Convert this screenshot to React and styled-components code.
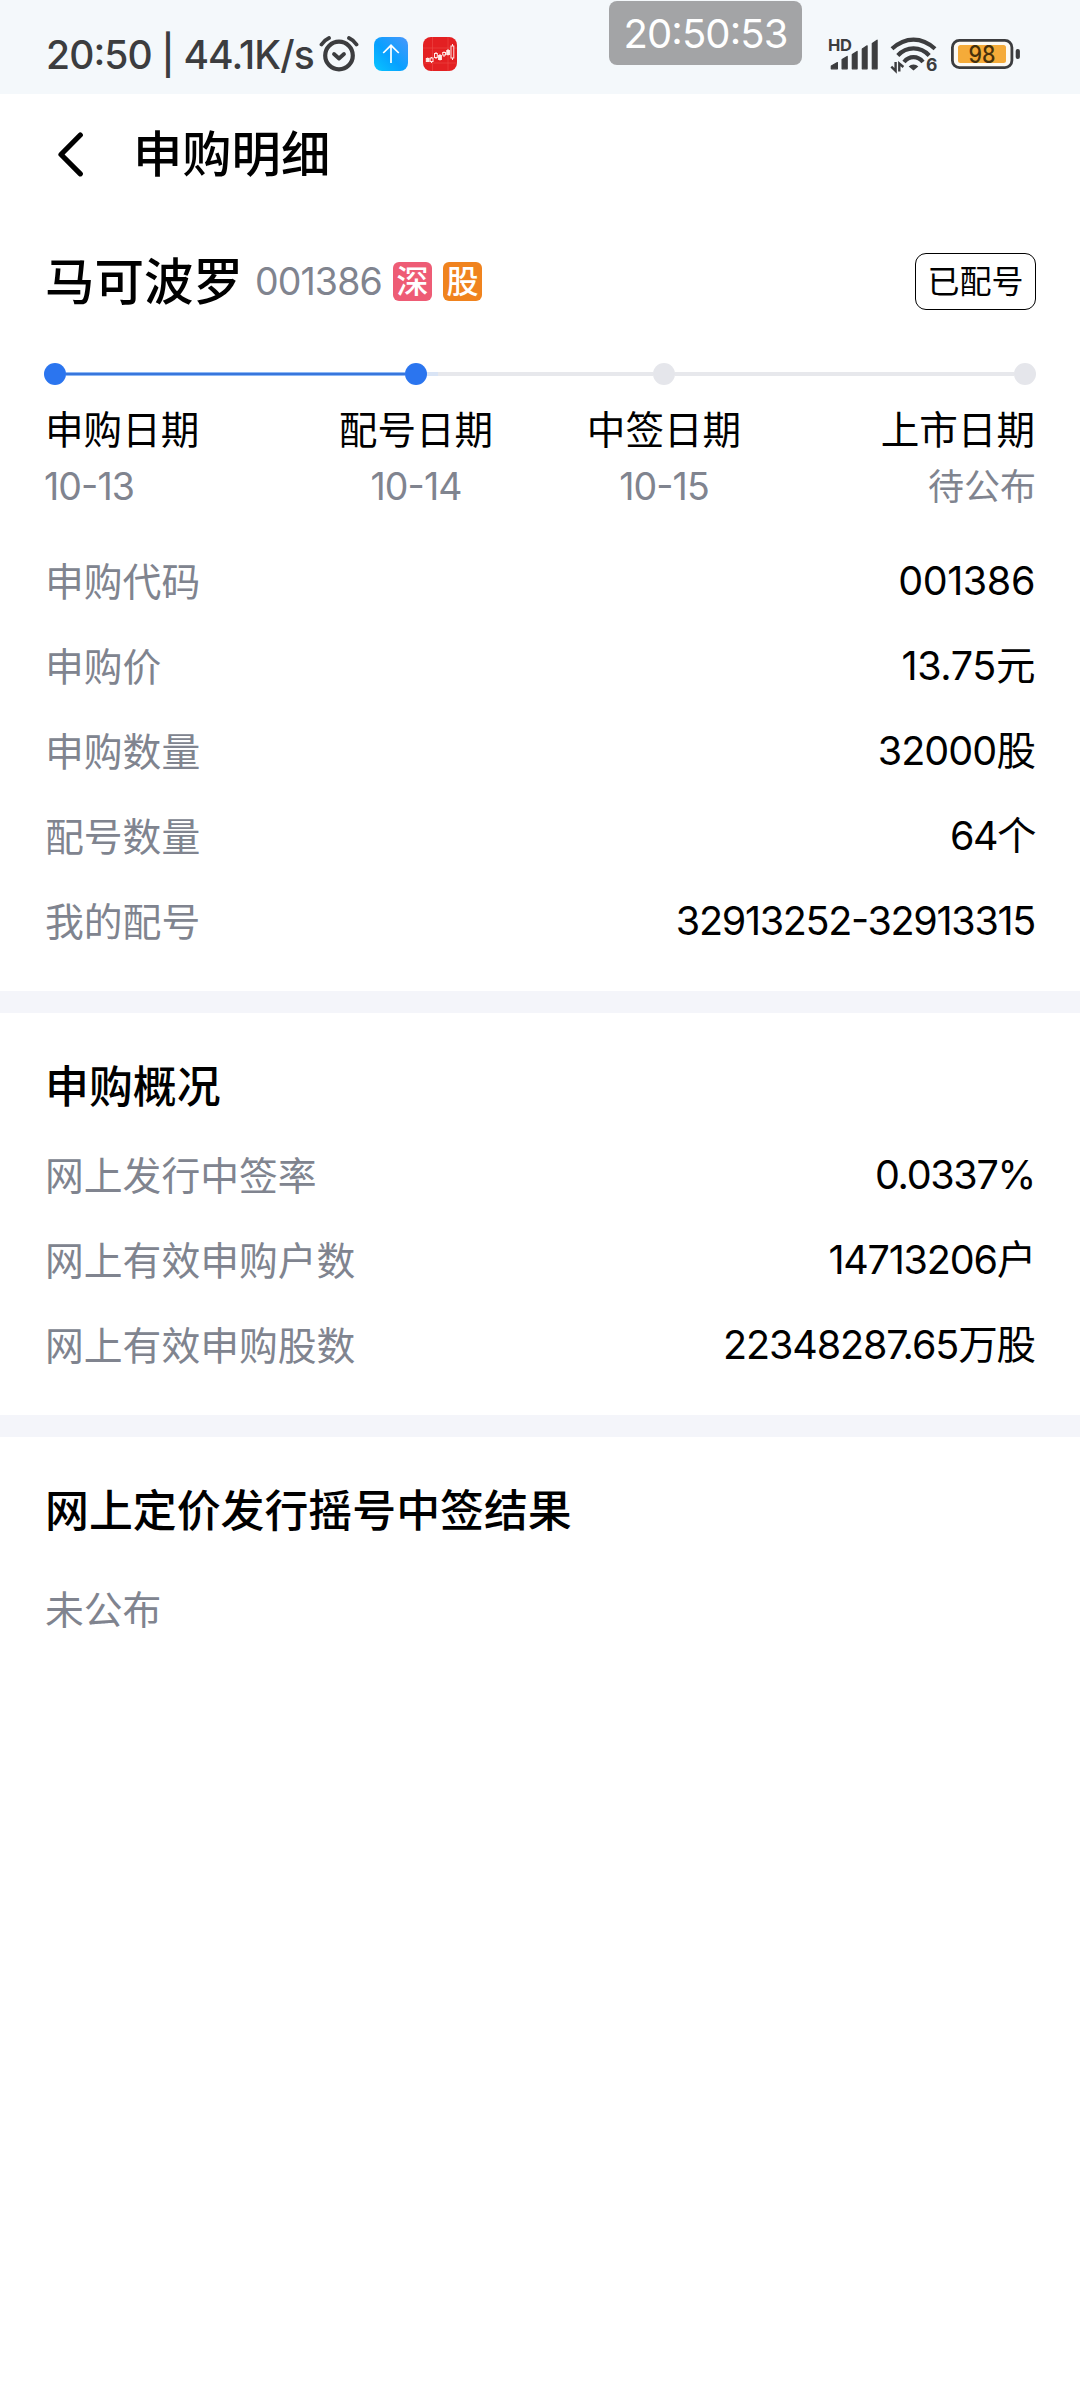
import styled, { createGlobalStyle } from 'styled-components';

const GlobalStyle = createGlobalStyle`
    * {
        box-sizing: border-box;
    }

    body {
        margin: 0;
        background-color: #ffffff;
        color: #000000;
        font-family: Inter, "Noto Sans CJK SC", sans-serif;
        font-feature-settings: "case" 1;
    }
`;

const Page = styled.div`
    position: relative;
    width: 1080px;
    min-height: 2400px;
    overflow: hidden;
    background-color: #ffffff;
`;

const StatusBar = styled.header`
    display: flex;
    justify-content: space-between;
    height: 94px;
    padding: 14px 59px 0 46px;
    background-color: #f4f8fb;
    color: #3c3d3f;
`;

const StatusGroup = styled.div`
    display: flex;
    align-items: center;
    gap: ${(props) => props.$gap};
`;

const StatusText = styled.span`
    width: 273px;
    margin-right: -15px;
    font-size: 39px;
    font-weight: 500;
    letter-spacing: -0.9px;
    white-space: nowrap;
`;

const ClockToast = styled.div`
    position: absolute;
    top: 1px;
    left: 609px;
    width: 193px;
    height: 64px;
    border-radius: 8px;
    background-color: #a3a4a6;
    color: #ffffff;
    font-size: 40px;
    line-height: 65px;
    letter-spacing: -0.9px;
    text-align: center;
`;

const NavBar = styled.nav`
    display: flex;
    align-items: center;
    gap: 46px;
    height: 118px;
    padding-left: 56px;
`;

const NavTitle = styled.h1`
    margin: 0;
    padding-top: 2px;
    font-size: 49.3px;
    font-weight: 500;
    line-height: 60px;
`;

const Section = styled.section`
    padding: ${(props) => props.$top || '43px'} 44px 27px;
`;

const Divider = styled.div`
    height: 22px;
    background-color: #f4f5fa;
`;

const StockRow = styled.div`
    display: flex;
    align-items: center;
    height: 57px;
`;

const StockName = styled.h2`
    margin: 0 12px 0 1px;
    padding-top: 2px;
    font-size: 49.5px;
    font-weight: 500;
    line-height: 57px;
`;

const StockCode = styled.span`
    width: 138px;
    color: #80848f;
    font-size: 37.5px;
    letter-spacing: -0.9px;
`;

const Tag = styled.span`
    width: 39px;
    height: 39px;
    margin-right: 11px;
    border-radius: 6px;
    background-color: ${(props) => props.$color};
    color: #ffffff;
    font-size: 32px;
    font-weight: 500;
    line-height: 39px;
    text-align: center;
`;

const Badge = styled.span`
    width: 121px;
    height: 57px;
    margin-left: auto;
    border: 1px solid #000000;
    border-radius: 11px;
    font-size: 32px;
    line-height: 56px;
    text-align: center;
`;

const Steps = styled.div`
    display: grid;
    grid-template-columns: repeat(4, 1fr);
    margin-top: 53px;
`;

const Step = styled.div`
    text-align: ${(props) => props.$align};
`;

const Track = styled.div`
    display: flex;
    align-items: center;
    height: 22px;
    margin-bottom: 20px;
`;

const Dot = styled.span`
    width: 22px;
    height: 22px;
    border-radius: 50%;
    background-color: ${(props) => props.$done ? '#2b75ef' : '#e5e6eb'};
`;

const Line = styled.span`
    flex: 1;
    height: 4px;
    background-color: ${(props) => props.$done ? '#3876dc' : '#e7e8ec'};
    border: solid ${(props) => props.$done ? '#8db8f5' : '#e7e8ec'};
    border-width: 1px 0;
`;

// short tail that runs on after the last finished dot
const LineTail = styled.span`
    z-index: 1;
    width: 11px;
    height: 4px;
    margin-right: -11px;
    background-color: #d9e4f5;
`;

const StepName = styled.div`
    padding: 0 1px;
    font-size: 38.6px;
    line-height: 50px;
`;

const StepDate = styled.div`
    margin-top: 7px;
    color: #80848f;
    font-size: ${(props) => props.$pending ? '36px' : '37.5px'};
    line-height: 50px;
    letter-spacing: ${(props) => props.$pending ? '0' : '-0.9px'};
`;

const Rows = styled.div`
    margin-top: ${(props) => props.$top};
`;

const Row = styled.div`
    display: flex;
    justify-content: space-between;
    height: 85px;
    padding: 0 1px;
    font-size: 38.8px;
    line-height: 85px;
`;

const Label = styled.span`
    color: #80848f;
`;

const Value = styled.span`
    font-size: 39.5px;
    letter-spacing: ${(props) => props.$spacing};
`;

const SectionTitle = styled.h2`
    margin: 0;
    padding: 1px 0 0 1px;
    font-size: 43.9px;
    font-weight: 500;
    line-height: 60px;
`;

const Empty = styled.p`
    margin: 39px 0 0;
    padding-left: 1px;
    color: #80848f;
    font-size: 38.8px;
    line-height: 60px;
`;

const AlarmIcon = () => (
    <svg width="40" height="38" viewBox="0 0 40 38" fill="none" stroke="currentColor" strokeLinecap="round" strokeLinejoin="round">
        <circle cx="20" cy="20.5" r="13.8" strokeWidth="4.2" />
        <path d="M15 19l5 4.500 5-4.500" strokeWidth="3.800" />
        <path d="M2.500 9.500Q5.500 5 10 3M37.500 9.500Q34.500 5 30 3" strokeWidth="3.800" />
    </svg>
);

const UploadIcon = () => (
    <svg width="34" height="34" viewBox="0 0 34 34">
        <defs>
            <linearGradient id="upload" x1="0" y1="1" x2="1" y2="0">
                <stop offset="0" stopColor="#08c6ff" />
                <stop offset="0.45" stopColor="#07a0ff" />
                <stop offset="1" stopColor="#4a97fb" />
            </linearGradient>
        </defs>
        <rect width="34" height="34" rx="8" fill="url(#upload)" />
        <path d="M17 26V8.500M9.200 16L17 8.300L24.800 16" fill="none" stroke="#ffffff" strokeWidth="1.700" />
    </svg>
);

const StockAppIcon = () => (
    <svg width="34" height="34" viewBox="0 0 34 34">
        <rect width="34" height="34" rx="8" fill="#e32022" />
        <path d="M9.500 0V34M25 0V34M0 11H34M0 26H34" stroke="#ec4a48" strokeWidth="0.600" />
        <g stroke="#ffe9e6" strokeWidth="1" fill="none">
            <path d="M4.700 20.500V25M8.500 20V26M13 15V22M17 17V23.500M21 14.500V20M25 12V18.500M29.500 7V23" />
            <rect x="3.300" y="21.500" width="2.800" height="3" fill="#ffe9e6" />
            <rect x="7.200" y="21" width="2.800" height="3.500" fill="#e32022" />
            <rect x="11.500" y="16.500" width="2.800" height="4" fill="#e32022" />
            <rect x="15.600" y="18.500" width="2.800" height="4" fill="#ffe9e6" />
            <rect x="19.700" y="15.500" width="2.800" height="2.500" fill="#e32022" />
            <rect x="23.800" y="13.500" width="2.600" height="4" fill="#ffe9e6" />
            <rect x="28" y="9" width="2.800" height="12" fill="#e32022" />
        </g>
    </svg>
);

const SignalIcon = () => (
    <svg width="51" height="36" viewBox="0 0 51 36" fill="currentColor" stroke="currentColor" strokeWidth="1.200" strokeLinejoin="round">
        <text x="0" y="14.500" fontSize="16.500" fontWeight="700" stroke="none" textLength="24">HD</text>
        <path d="M3.300 32.800V30L9.400 26.600V32.800Z" />
        <path d="M14.100 32.800V23.600L19.200 20.400V32.800Z" />
        <path d="M24.300 32.800V18.600L29.100 15.400V32.800Z" />
        <path d="M34.300 32.800V13L39.100 9.800V32.800Z" />
        <path d="M44.300 32.800V7.600L49.100 4.200V32.800Z" />
    </svg>
);

const WifiIcon = () => (
    <svg width="50" height="40" viewBox="0 -2 50 40" fill="none" stroke="currentColor" strokeWidth="4.200">
        <path d="M2 12.800Q12 3.600 23.500 3.600T45 12.800" />
        <path d="M7.800 19.500Q14.500 12.400 23.500 12.400T39.200 19.500" />
        <path d="M14 26Q18 21.200 23.500 21.200T33 26" />
        <path d="M23.500 28.500Q26.500 28.500 28.300 30.500L23.500 34.500L18.700 30.500Q20.500 28.500 23.500 28.500Z" fill="currentColor" stroke="none" />
        <path d="M5.600 26V34.800L1.300 30.600M9.300 35.500V27.500L13.400 31" strokeWidth="2.400" />
        <text x="36" y="35.300" fontSize="17.500" fontWeight="700" fill="currentColor" stroke="none">6</text>
    </svg>
);

const BatteryIcon = () => (
    <svg width="70" height="32" viewBox="0 0 70 32">
        <rect x="1.400" y="2.400" width="59.500" height="27.200" rx="7" fill="#fdfaf3" stroke="#3c3d3f" strokeWidth="2.800" />
        <rect x="7" y="7" width="48" height="18" rx="2.500" fill="#f5ab39" />
        <rect x="64.700" y="11" width="4.200" height="10" rx="2" fill="#3c3d3f" />
        <text x="31" y="24.700" fontSize="24" fontWeight="500" textAnchor="middle" fill="#46300c" textLength="27" lengthAdjust="spacingAndGlyphs">98</text>
    </svg>
);

const BackIcon = () => (
    <svg width="31" height="48" viewBox="0 0 31 48" fill="none" stroke="#000000" strokeWidth="5.200" strokeLinecap="round" strokeLinejoin="round">
        <path d="M24.300 6L5 25.500L24.300 44.800" />
    </svg>
);

const steps = [
    { name: '申购日期', date: '10-13', align: 'left', done: true },
    { name: '配号日期', date: '10-14', align: 'center', done: true },
    { name: '中签日期', date: '10-15', align: 'center', done: false },
    { name: '上市日期', date: '待公布', align: 'right', done: false },
];

const details = [
    { label: '申购代码', value: '001386', spacing: '-0.4px' },
    { label: '申购价', value: '13.75元', spacing: '-0.4px' },
    { label: '申购数量', value: '32000股', spacing: '-0.9px' },
    { label: '配号数量', value: '64个', spacing: '-1.5px' },
    { label: '我的配号', value: '32913252-32913315', spacing: '-1.3px' },
];

const overview = [
    { label: '网上发行中签率', value: '0.0337%', spacing: '-1.3px' },
    { label: '网上有效申购户数', value: '14713206户', spacing: '-1.2px' },
    { label: '网上有效申购股数', value: '22348287.65万股', spacing: '-1.1px' },
];

const InfoRows = ({ items, top }) => (
    <Rows $top={top}>
        {
            items.map(item => (
                <Row key={item.label}>
                    <Label>{item.label}</Label>
                    <Value $spacing={item.spacing}>{item.value}</Value>
                </Row>
            ))
        }
    </Rows>
);

const Timeline = () => (
    <Steps>
        {
            steps.map((step, i) => {
                const next = steps[i + 1];

                return (
                    <Step key={step.name} $align={step.align}>
                        <Track>
                            {i > 0 && <Line $done={step.done} />}
                            <Dot $done={step.done} />
                            {step.done && next && !next.done && <LineTail />}
                            {next && <Line $done={next.done} />}
                        </Track>
                        <StepName>{step.name}</StepName>
                        <StepDate $pending={!next}>{step.date}</StepDate>
                    </Step>
                )
            })
        }
    </Steps>
);

const App = () => {

    return (
    <>
        <GlobalStyle />
        <Page>
            <StatusBar>
                <StatusGroup $gap="15px">
                    <StatusText>20:50 | 44.1K/s</StatusText>
                    <AlarmIcon />
                    <UploadIcon />
                    <StockAppIcon />
                </StatusGroup>
                <StatusGroup $gap="11px">
                    <SignalIcon />
                    <WifiIcon />
                    <BatteryIcon />
                </StatusGroup>
            </StatusBar>
            <ClockToast>20:50:53</ClockToast>
            <NavBar>
                <BackIcon />
                <NavTitle>申购明细</NavTitle>
            </NavBar>
            <Section $top="41px">
                <StockRow>
                    <StockName>马可波罗</StockName>
                    <StockCode>001386</StockCode>
                    <Tag $color="#ee5c75">深</Tag>
                    <Tag $color="#f0831e">股</Tag>
                    <Badge>已配号</Badge>
                </StockRow>
                <Timeline />
                <InfoRows items={details} top="27px" />
            </Section>
            <Divider />
            <Section>
                <SectionTitle>申购概况</SectionTitle>
                <InfoRows items={overview} top="16px" />
            </Section>
            <Divider />
            <Section>
                <SectionTitle>网上定价发行摇号中签结果</SectionTitle>
                <Empty>未公布</Empty>
            </Section>
        </Page>
    </>
    )
}

export default App;
